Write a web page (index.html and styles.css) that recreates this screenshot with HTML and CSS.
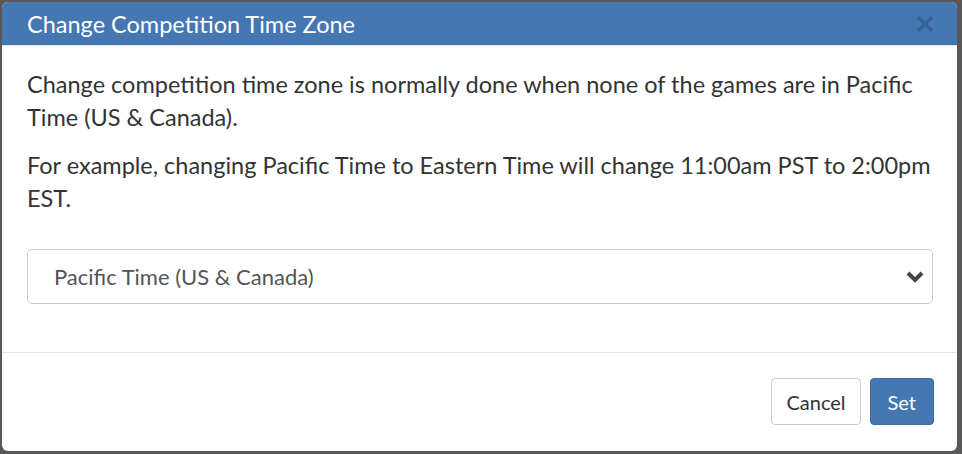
FILE: index.html
```html
<!DOCTYPE html>
<html lang="en">
<head>
    <meta charset="UTF-8">
    <meta name="viewport" content="width=device-width, initial-scale=1.0">
    <title>Change Competition Time Zone</title>
    <link rel="stylesheet" href="styles.css">
</head>
<body>
    <div class="modal">
        <div class="modal-header">
            <h4 class="modal-title">Change Competition Time Zone</h4>
            <button class="close" aria-label="Close">
                <svg width="18" height="18" viewBox="0 0 18 18"><path d="M2 2 L16 16 M16 2 L2 16" stroke="currentColor" stroke-width="3.6" fill="none"/></svg>
            </button>
        </div>
        <div class="modal-body">
            <p>Change competition time zone is normally done when none of the games are in Pacific Time (US &amp; Canada).</p>
            <p>For example, changing Pacific Time to Eastern Time will change 11:00am PST to 2:00pm EST.</p>
            <div class="select">
                <span>Pacific Time (US &amp; Canada)</span>
                <svg class="chevron" width="18" height="13" viewBox="0 0 18 13"><path d="M2 3 L9 10 L16 3" stroke="currentColor" stroke-width="4" fill="none"/></svg>
            </div>
        </div>
        <div class="modal-footer">
            <button class="btn btn-default">Cancel</button>
            <button class="btn btn-primary">Set</button>
        </div>
    </div>
</body>
</html>
```

FILE: styles.css
```css
html, body {
    height: 100%;
}
body {
    margin: 0;
    padding: 2px 5px 3px 2px;
    box-sizing: border-box;
    background-color: #585858;
    font-family: Lato, "Open Sans", sans-serif;
    color: #333;
}
.modal {
    height: 100%;
    background: #fff;
    border-radius: 6px;
    overflow: hidden;
    display: flex;
    flex-direction: column;
}
.modal-header {
    height: 43px;
    background-color: #4577b3;
    border-bottom: 1px solid #e5e5e5;
    display: flex;
    align-items: center;
    justify-content: space-between;
    padding: 0 23px 0 25px;
}
.modal-title {
    margin: 0;
    font-size: 23.5px;
    font-weight: normal;
    color: #fff;
}
.close {
    background: none;
    border: none;
    padding: 0;
    color: #37629a;
    display: flex;
}
.modal-body {
    flex: 1;
    padding: 22px 24px 0 25px;
}
.modal-body p {
    margin: 0 0 15px;
    font-size: 23.5px;
    line-height: 33px;
}
.select {
    margin-top: 34px;
    height: 53px;
    border: 1px solid #ccc;
    border-radius: 5px;
    display: flex;
    align-items: center;
    justify-content: space-between;
    padding: 0 8px 0 26px;
    font-size: 22px;
    color: #555;
}
.chevron {
    color: #444;
}
.modal-footer {
    border-top: 1px solid #e5e5e5;
    padding: 25px 23px 26px;
    display: flex;
    justify-content: flex-end;
    gap: 9px;
}
.btn {
    height: 47px;
    font-family: Lato, sans-serif;
    font-size: 20px;
    border-radius: 4px;
    padding: 0 14px;
    border: 1px solid #ccc;
}
.btn-default {
    background: #fff;
    color: #333;
}
.btn-primary {
    padding: 0 17px;
    background: #4577b3;
    border-color: #3b6ba5;
    color: #fff;
}
```
